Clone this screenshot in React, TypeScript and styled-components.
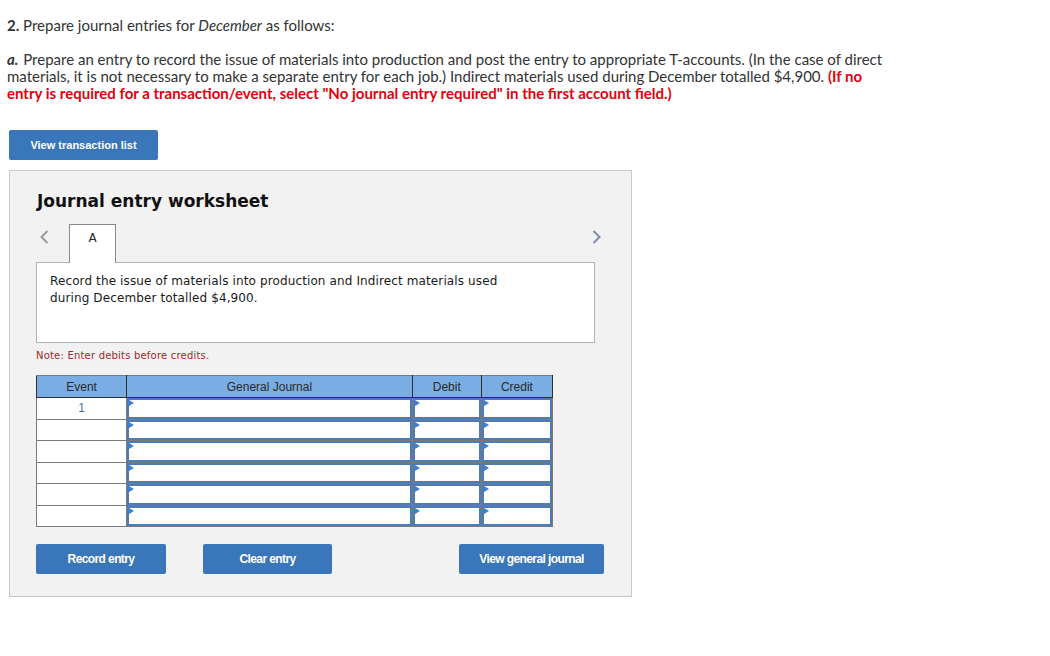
import React from 'react';
import styled, { createGlobalStyle } from 'styled-components';

const GlobalStyle = createGlobalStyle`
  body {
    margin: 0;
    background: #ffffff;
  }
`;

const Page = styled.div`
  padding: 17px 0 0 7px;
  font-family: Lato, "Liberation Sans", sans-serif;
  color: #333333;
`;

const Question = styled.p`
  margin: 0;
  font-size: 15px;
  line-height: 17px;
`;

const Instructions = styled.p`
  margin: 17px 0 0;
  width: 893px;
  font-size: 15px;
  line-height: 17px;
`;

const PartLabel = styled.strong`
  font-style: italic;
  padding-right: 1px;
`;

const Warning = styled.strong`
  color: #e3000f;
`;

const BlueButton = styled.button<{ $width: number }>`
  width: ${p => p.$width}px;
  height: 30px;
  border: none;
  border-radius: 2px;
  background: #3a76ba;
  color: #ffffff;
  font-family: "Liberation Sans", Arial, sans-serif;
  font-weight: bold;
  font-size: 11px;
  cursor: pointer;
`;

const ActionButton = styled(BlueButton)`
  font-size: 12px;
  letter-spacing: -0.6px;
`;

const TopButtonRow = styled.div`
  margin: 28px 0 0 2px;
`;

const Panel = styled.section`
  margin: 10px 0 0 2px;
  width: 621px;
  height: 425px;
  border: 1px solid #c8c8c8;
  background: #f2f2f2;
`;

const PanelInner = styled.div`
  padding: 19px 0 0 26px;
  display: flex;
  flex-direction: column;
`;

const Title = styled.h2`
  margin: 0 0 0 1px;
  font-family: "DejaVu Sans", Verdana, sans-serif;
  font-weight: bold;
  font-size: 17px;
  line-height: 22px;
  color: #111111;
`;

const TabRow = styled.div`
  margin-top: 12px;
  width: 568px;
  display: flex;
  align-items: flex-start;
  position: relative;
  z-index: 1;
`;

const Chevron = styled.button<{ $color: string; $side: 'left' | 'right' }>`
  width: 33px;
  height: 26px;
  padding: ${p => (p.$side === 'left' ? '0 0 0 4px' : '0 3px 0 0')};
  border: none;
  background: transparent;
  color: ${p => p.$color};
  display: flex;
  align-items: center;
  justify-content: ${p => (p.$side === 'left' ? 'flex-start' : 'flex-end')};
`;

const Tab = styled.div`
  width: 45px;
  height: 38px;
  margin-bottom: -1px;
  border: 1px solid #8a8a8a;
  border-bottom: none;
  background: #ffffff;
  font-family: "DejaVu Sans", Verdana, sans-serif;
  font-size: 12px;
  color: #222222;
  text-align: center;
  line-height: 26px;
`;

const Spacer = styled.div`
  flex: 1;
`;

const Description = styled.div`
  width: 531px;
  height: 69px;
  padding: 10px 13px 0;
  border: 1px solid #b4b4b4;
  background: #ffffff;
  font-family: "DejaVu Sans", Verdana, sans-serif;
  font-size: 12px;
  letter-spacing: 0.12px;
  line-height: 17px;
  color: #1a1a1a;
`;

const Note = styled.p`
  margin: 7px 0 0;
  font-family: "DejaVu Sans", Verdana, sans-serif;
  font-size: 10px;
  letter-spacing: 0.2px;
  line-height: 12px;
  color: #9b2b2b;
`;

const Table = styled.table`
  margin-top: 13px;
  width: 517px;
  border-collapse: collapse;
  table-layout: fixed;
  background: #ffffff;
  border: 1px solid #7a7a7a;
  font-family: "Liberation Sans", Arial, sans-serif;
  font-size: 12px;
`;

const HeadCell = styled.th<{ $width: number }>`
  width: ${p => p.$width}px;
  height: 21px;
  padding: 0;
  background: #7aade3;
  border: 1px solid #2e2e2e;
  border-top-color: #7a7a7a;
  font-weight: normal;
  color: #2a2a2a;
`;

const EventCell = styled.td`
  height: 20.5px;
  padding: 0;
  border: 1px solid #7a7a7a;
  text-align: center;
  color: #3d6fa6;
`;

const InputCell = styled.td`
  padding: 0;
  height: 20.5px;
  border: 1px solid #7a7a7a;
`;

const Field = styled.div`
  position: relative;
  height: 100%;
  box-sizing: border-box;
  border: 2px solid #4a7cba;
  &::before {
    content: '';
    position: absolute;
    left: 0;
    top: 0;
    border-left: 5px solid #3f7fd0;
    border-top: 3px solid transparent;
    border-bottom: 3px solid transparent;
  }
`;

const ButtonRow = styled.div`
  margin-top: 17px;
  width: 568px;
  display: flex;
  align-items: center;
  gap: 37px;
`;

const ChevronIcon = ({ dir }: { dir: 'left' | 'right' }) => (
  <svg width="9" height="14" viewBox="0 0 9 14">
    <polyline
      points={dir === 'left' ? '7.5,1 1.5,7 7.5,13' : '1.5,1 7.5,7 1.5,13'}
      fill="none"
      stroke="currentColor"
      strokeWidth="2"
    />
  </svg>
);

const rows = ['1', '', '', '', '', ''];

export default function App() {
  return (
    <>
      <GlobalStyle />
      <Page>
        <Question>
          <strong>2.</strong> Prepare journal entries for <em>December</em> as follows:
        </Question>
        <Instructions>
          <PartLabel>a.</PartLabel> Prepare an entry to record the issue of materials into production and post the
          entry to appropriate T-accounts. (In the case of direct materials, it is not necessary to make a separate
          entry for each job.) Indirect materials used during December totalled $4,900.{' '}
          <Warning>
            (If no entry is required for a transaction/event, select "No journal entry required" in the first account
            field.)
          </Warning>
        </Instructions>
        <TopButtonRow>
          <BlueButton $width={149}>View transaction list</BlueButton>
        </TopButtonRow>
        <Panel>
          <PanelInner>
            <Title>Journal entry worksheet</Title>
            <TabRow>
              <Chevron $color="#9a9a9a" $side="left">
                <ChevronIcon dir="left" />
              </Chevron>
              <Tab>A</Tab>
              <Spacer />
              <Chevron $color="#7d8ea6" $side="right">
                <ChevronIcon dir="right" />
              </Chevron>
            </TabRow>
            <Description>
              Record the issue of materials into production and Indirect materials used
              <br />
              during December totalled $4,900.
            </Description>
            <Note>Note: Enter debits before credits.</Note>
            <Table>
              <thead>
                <tr>
                  <HeadCell $width={89}>Event</HeadCell>
                  <HeadCell $width={284}>General Journal</HeadCell>
                  <HeadCell $width={68}>Debit</HeadCell>
                  <HeadCell $width={70}>Credit</HeadCell>
                </tr>
              </thead>
              <tbody>
                {rows.map((event, i) => (
                  <tr key={i}>
                    <EventCell>{event}</EventCell>
                    <InputCell><Field /></InputCell>
                    <InputCell><Field /></InputCell>
                    <InputCell><Field /></InputCell>
                  </tr>
                ))}
              </tbody>
            </Table>
            <ButtonRow>
              <ActionButton $width={130}>Record entry</ActionButton>
              <ActionButton $width={129}>Clear entry</ActionButton>
              <Spacer />
              <ActionButton $width={145}>View general journal</ActionButton>
            </ButtonRow>
          </PanelInner>
        </Panel>
      </Page>
    </>
  );
}
